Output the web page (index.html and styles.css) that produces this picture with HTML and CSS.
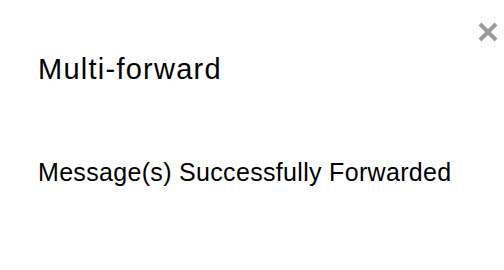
FILE: index.html
```html
<!DOCTYPE html>
<html>
<head>
<meta charset="utf-8">
<link rel="stylesheet" href="styles.css">
</head>
<body>
<div class="dialog">
  <button class="close" aria-label="Close">
    <svg width="22" height="22" viewBox="0 0 22 22"><path d="M3 3 L19 19 M19 3 L3 19" stroke="#9a9a9a" stroke-width="4" stroke-linecap="butt"/></svg>
  </button>
  <h1 class="title">Multi-forward</h1>
  <p class="message">Message(s) Successfully Forwarded</p>
</div>
</body>
</html>
```
FILE: styles.css
```css
html, body {
  margin: 0;
  padding: 0;
  background: #ffffff;
}
.dialog {
  position: relative;
  width: 504px;
  height: 270px;
  box-sizing: border-box;
  padding: 53px 0 0 38px;
  font-family: "Liberation Sans", Arial, sans-serif;
  color: #000;
}
.title {
  margin: 0;
  font-size: 29px;
  line-height: 32px;
  letter-spacing: 1.25px;
  font-weight: normal;
}
.message {
  margin: 73px 0 0 0;
  font-size: 25px;
  line-height: 28px;
  letter-spacing: 0.32px;
}
.close {
  position: absolute;
  top: 21px;
  left: 477px;
  width: 22px;
  height: 22px;
  padding: 0;
  border: 0;
  background: none;
  display: block;
}
.close svg {
  display: block;
}
```
